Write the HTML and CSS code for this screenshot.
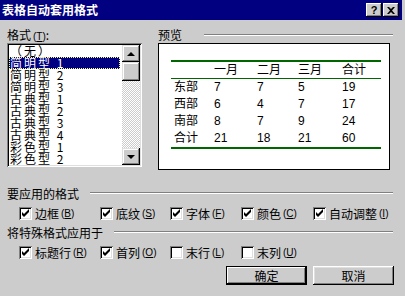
FILE: index.html
```html
<!DOCTYPE html>
<html lang="zh-CN">
<head>
    <meta charset="UTF-8">
    <title>表格自动套用格式</title>
    <link rel="stylesheet" href="styles.css">
</head>
<body>
    <div class="window">
        <div class="titlebar">
            <span class="title">表格自动套用格式</span>
            <div class="caption-btns">
                <span class="cbtn cbtn-help">?</span>
                <span class="cbtn">
                    <svg width="8" height="7" viewBox="0 0 8 7"><path d="M0 0h2l2 2 2-2h2L5 3.5 8 7H6L4 5 2 7H0l3-3.5z" fill="#000"/></svg>
                </span>
            </div>
        </div>

        <div class="content">
            <div class="top">
                <div class="formats">
                    <div class="label">格式<span class="key">(<u>T</u>)</span>:</div>
                    <div class="listbox">
                        <ul class="items">
                            <li>（无）</li>
                            <li class="selected">简明型 1</li>
                            <li>简明型 2</li>
                            <li>简明型 3</li>
                            <li>古典型 1</li>
                            <li>古典型 2</li>
                            <li>古典型 3</li>
                            <li>古典型 4</li>
                            <li>彩色型 1</li>
                            <li>彩色型 2</li>
                        </ul>
                        <div class="scrollbar">
                            <span class="sbtn"><i class="arrow-up"></i></span>
                            <span class="thumb"></span>
                            <span class="track"></span>
                            <span class="sbtn"><i class="arrow-down"></i></span>
                        </div>
                    </div>
                </div>

                <div class="preview">
                    <div class="group-head">预览<span class="rule"></span></div>
                    <div class="preview-box">
                        <div class="sheet">
                            <div class="row head">
                                <span></span><span>一月</span><span>二月</span><span>三月</span><span>合计</span>
                            </div>
                            <div class="row"><span>东部</span><span>7</span><span>7</span><span>5</span><span>19</span></div>
                            <div class="row"><span>西部</span><span>6</span><span>4</span><span>7</span><span>17</span></div>
                            <div class="row"><span>南部</span><span>8</span><span>7</span><span>9</span><span>24</span></div>
                            <div class="row"><span>合计</span><span>21</span><span>18</span><span>21</span><span>60</span></div>
                        </div>
                    </div>
                </div>
            </div>

            <div class="group-head section">要应用的格式<span class="rule"></span></div>
            <div class="checks">
                <label class="check"><span class="box on"></span>边框<span class="key">(<u>B</u>)</span></label>
                <label class="check"><span class="box on"></span>底纹<span class="key">(<u>S</u>)</span></label>
                <label class="check"><span class="box on"></span>字体<span class="key">(<u>F</u>)</span></label>
                <label class="check"><span class="box on"></span>颜色<span class="key">(<u>C</u>)</span></label>
                <label class="check"><span class="box on"></span>自动调整<span class="key">(<u>I</u>)</span></label>
            </div>

            <div class="group-head section second">将特殊格式应用于<span class="rule"></span></div>
            <div class="checks">
                <label class="check"><span class="box on"></span>标题行<span class="key">(<u>R</u>)</span></label>
                <label class="check"><span class="box on"></span>首列<span class="key">(<u>O</u>)</span></label>
                <label class="check"><span class="box"></span>末行<span class="key">(<u>L</u>)</span></label>
                <label class="check"><span class="box"></span>末列<span class="key">(<u>U</u>)</span></label>
            </div>

            <div class="actions">
                <button class="default">确定</button>
                <button>取消</button>
            </div>
        </div>
    </div>
</body>
</html>
```

FILE: styles.css
```css
body, html {
    margin: 0;
    padding: 0;
    width: 405px;
    height: 296px;
    overflow: hidden;
    background-color: #cccccc;
    font-family: "Noto Sans CJK SC", sans-serif;
    font-size: 12px;
    color: #000;
}

.window {
    width: 402px;
    height: 296px;
}

/* title bar */
.titlebar {
    height: 20px;
    background-color: #000080;
    color: #fff;
    display: flex;
    align-items: center;
    justify-content: space-between;
    padding: 0 3px 0 2px;
}

.title {
    font-size: 12px;
    font-weight: bold;
    line-height: 20px;
}

.caption-btns {
    display: flex;
    gap: 1px;
}

.cbtn {
    width: 16px;
    height: 14px;
    box-sizing: border-box;
    background-color: #cccccc;
    box-shadow: inset -1px -1px #000, inset 1px 1px #fff, inset -2px -2px #808080;
    display: flex;
    align-items: center;
    justify-content: center;
    color: #000;
}

.cbtn-help {
    font-family: "Liberation Sans", sans-serif;
    font-weight: bold;
    font-size: 11px;
    line-height: 14px;
}

.content {
    padding: 6px 9px 0 7px;
}

.key {
    font-family: "Liberation Sans", sans-serif;
    font-size: 10px;
    margin-left: 2px;
}

/* top area */
.top {
    display: flex;
    gap: 16px;
    align-items: flex-start;
}

.label {
    height: 17px;
    line-height: 17px;
}

.listbox {
    width: 135px;
    height: 124px;
    box-sizing: border-box;
    padding: 2px;
    background-color: #fff;
    box-shadow: inset 1px 1px #808080, inset -1px -1px #fff, inset 2px 2px #000, inset -2px -2px #dfdfdf;
    display: flex;
}

.items {
    list-style: none;
    margin: 0;
    padding: 0;
    flex: 1;
}

.items li {
    height: 12px;
    line-height: 12px;
    padding-left: 1px;
    margin-right: 2px;
    letter-spacing: 2px;
    white-space: nowrap;
}

.items li.selected {
    background-color: #000080;
    color: #fff;
    outline: 1px dotted #ffff80;
    outline-offset: -1px;
}

.scrollbar {
    width: 18px;
    display: flex;
    flex-direction: column;
}

.sbtn, .thumb {
    height: 17px;
    background-color: #cccccc;
    box-shadow: inset -1px -1px #000, inset 1px 1px #dfdfdf, inset -2px -2px #808080, inset 2px 2px #fff;
    display: flex;
    align-items: center;
    justify-content: center;
}

.thumb {
    height: 19px;
}

.track {
    flex: 1;
    background: repeating-conic-gradient(#fff 0 25%, #cccccc 0 50%) 0 0 / 2px 2px;
}

.arrow-up, .arrow-down {
    width: 0;
    height: 0;
    border-left: 4px solid transparent;
    border-right: 4px solid transparent;
}

.arrow-up {
    border-bottom: 4px solid #000;
}

.arrow-down {
    border-top: 4px solid #000;
}

/* preview */
.preview {
    width: 237px;
}

.group-head {
    display: flex;
    align-items: center;
    height: 17px;
    white-space: nowrap;
}

.rule {
    flex: 1;
    margin-left: 22px;
    border-top: 1px solid #808080;
    border-bottom: 1px solid #fff;
}

.preview-box {
    width: 232px;
    height: 127px;
    box-sizing: border-box;
    border: 1px solid #000;
    background-color: #fff;
    padding: 16px 0 0 12px;
}

.sheet {
    width: 210px;
    border-top: 2px solid #006600;
    border-bottom: 2px solid #006600;
    font-family: "Liberation Sans", "Noto Sans CJK SC", sans-serif;
}

.row {
    display: grid;
    grid-template-columns: 43px 43px 41px 44px 39px;
    height: 17px;
    line-height: 17px;
}

.row span:first-child {
    padding-left: 3px;
}

.row.head {
    height: 16px;
    border-bottom: 1px solid #006600;
}

/* formats to apply */
.section {
    height: 14px;
    margin-top: 16px;
}

.section .rule {
    margin-left: 11px;
}

.section.second {
    margin-top: 4px;
}

.checks {
    display: grid;
    grid-template-columns: 81px 70px 71px 72px auto;
    height: 16px;
    margin-top: 5px;
    padding-left: 12px;
}

.check {
    display: flex;
    align-items: center;
    white-space: nowrap;
}

.box {
    width: 13px;
    height: 13px;
    box-sizing: border-box;
    margin-right: 3px;
    background-color: #fff;
    box-shadow: inset 1px 1px #808080, inset -1px -1px #fff, inset 2px 2px #000, inset -2px -2px #dfdfdf;
}

.box.on {
    background: #fff url("data:image/svg+xml,%3Csvg xmlns='http://www.w3.org/2000/svg' width='13' height='13'%3E%3Cpath d='M3 5v3l2 2 5-5V2L5 7z' fill='%23000'/%3E%3C/svg%3E") no-repeat;
}

/* buttons */
.actions {
    display: flex;
    justify-content: flex-end;
    gap: 6px;
    margin-top: 6px;
    margin-right: -1px;
}

button {
    width: 81px;
    height: 19px;
    padding: 0;
    border: none;
    background-color: #cccccc;
    font-family: "Noto Sans CJK SC", sans-serif;
    font-size: 12px;
    color: #000;
    box-shadow: inset -1px -1px #000, inset 1px 1px #fff, inset -2px -2px #808080, inset 2px 2px #dfdfdf;
}

button.default {
    box-shadow: inset 0 0 0 1px #000, inset -2px -2px #000, inset 2px 2px #fff, inset -3px -3px #808080;
}
```
